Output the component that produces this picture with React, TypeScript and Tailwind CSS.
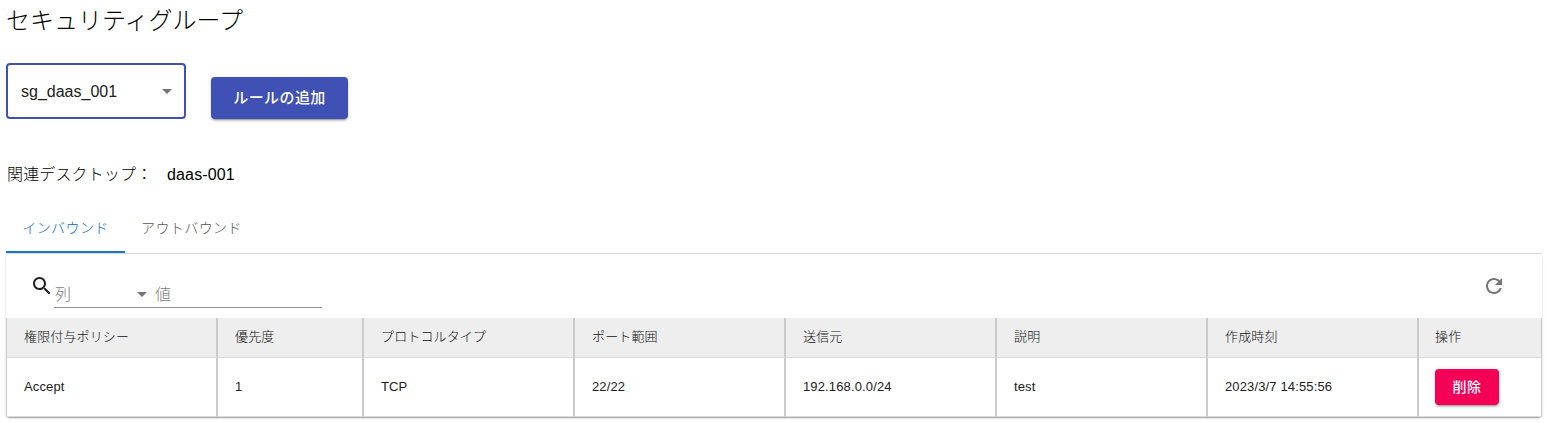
type Column = { label: string; value: string; width: string };

const columns: Column[] = [
  { label: "権限付与ポリシー", value: "Accept", width: "w-[211px]" },
  { label: "優先度", value: "1", width: "w-[146px]" },
  { label: "プロトコルタイプ", value: "TCP", width: "w-[211px]" },
  { label: "ポート範囲", value: "22/22", width: "w-[211px]" },
  { label: "送信元", value: "192.168.0.0/24", width: "w-[211px]" },
  { label: "説明", value: "test", width: "w-[211px]" },
  { label: "作成時刻", value: "2023/3/7 14:55:56", width: "w-[211px]" },
];

function Caret() {
  return (
    <svg viewBox="0 0 24 24" className="size-6 shrink-0 fill-[#757575]" aria-hidden="true">
      <path d="M7 10l5 5 5-5z" />
    </svg>
  );
}

function Toolbar() {
  return (
    <div className="flex h-16 items-start justify-between pr-9 pl-6">
      <div className="flex">
        <svg viewBox="0 0 24 24" className="mt-5 size-6 fill-[#212121]" aria-hidden="true">
          <path d="M15.5 14h-.79l-.28-.27C15.41 12.59 16 11.11 16 9.5 16 5.91 13.09 3 9.5 3S3 5.91 3 9.5 5.91 16 9.5 16c1.61 0 3.09-.59 4.23-1.57l.27.28v.79l5 4.99L20.49 19l-4.99-5zm-6 0C7.01 14 5 11.99 5 9.5S7.01 5 9.5 5 14 7.01 14 9.5 11.99 14 9.5 14z" />
        </svg>
        <div className="mt-[26px] flex h-7 w-[268px] items-center border-b border-[#949494] text-base leading-6 text-[#7c7c7c]">
          <span className="w-[76px] pt-0.5 pl-px">列</span>
          <Caret />
          <span className="pt-0.5 pl-px">値</span>
        </div>
      </div>
      <svg viewBox="0 0 24 24" className="mt-5 size-6 fill-[#757575]" aria-hidden="true">
        <path d="M17.65 6.35C16.2 4.9 14.21 4 12 4c-4.42 0-7.99 3.58-7.99 8s3.57 8 7.99 8c3.73 0 6.84-2.55 7.73-6h-2.08c-.82 2.33-3.04 4-5.65 4-3.31 0-6-2.69-6-6s2.69-6 6-6c1.66 0 3.14.69 4.22 1.78L13 11h7V4l-2.35 2.35z" />
      </svg>
    </div>
  );
}

function RulesTable() {
  return (
    <table className="w-[1536px] table-fixed border-separate border-spacing-0 text-left text-[13px] leading-5 tracking-[0.01071em] text-[#212121]">
      <thead>
        <tr className="h-10 bg-[#eeeeee] text-[#111111]">
          {columns.map((c) => (
            <th key={c.label} className={`${c.width} border-x border-b border-x-[#cbcbcb] border-b-[#dddddd] pr-4 pb-0.5 pl-[17px] font-light`}>
              {c.label}
            </th>
          ))}
          <th className="w-[124px] border-x border-b border-x-[#cbcbcb] border-b-[#dddddd] px-4 pb-0.5 font-light">操作</th>
        </tr>
      </thead>
      <tbody>
        <tr className="h-[59px]">
          {columns.map((c) => (
            <td key={c.label} className="border-x border-b border-x-[#cbcbcb] border-b-[#dddddd] pr-4 pl-[17px]">
              {c.value}
            </td>
          ))}
          <td className="border-x border-b border-x-[#cbcbcb] border-b-[#dddddd] px-4">
            <button className="block h-9 w-16 rounded bg-[#f50057] text-sm font-medium tracking-[0.02857em] text-white shadow-[0_3px_1px_-2px_rgba(0,0,0,0.2),0_2px_2px_0_rgba(0,0,0,0.14),0_1px_5px_0_rgba(0,0,0,0.12)]">
              削除
            </button>
          </td>
        </tr>
      </tbody>
    </table>
  );
}

export default function App() {
  return (
    <main className="h-[423px] overflow-hidden bg-white pl-1.5 font-['Liberation_Sans','Noto_Sans_CJK_JP',sans-serif] font-light text-black">
      <h1 className="flex h-10 items-center pt-0.5 text-2xl font-light">セキュリティグループ</h1>

      <div className="mt-[23px] flex gap-[25px]">
        <div className="flex h-14 w-[180px] items-center justify-between rounded border-2 border-[#3f51b5] pr-[5px] pl-[13px] text-base text-[#212121]">
          <span className="pt-0.5">sg_daas_001</span>
          <Caret />
        </div>
        <button className="mt-3.5 h-[42px] w-[137px] rounded bg-[#3f51b5] text-[15px] font-medium tracking-[0.02857em] text-white shadow-[0_3px_1px_-2px_rgba(0,0,0,0.2),0_2px_2px_0_rgba(0,0,0,0.14),0_1px_5px_0_rgba(0,0,0,0.12)]">
          ルールの追加
        </button>
      </div>

      <div className="mt-11 flex h-6 items-center pl-px text-base tracking-[0.00938em]">
        <span className="w-40">関連デスクトップ：</span>
        <span>daas-001</span>
      </div>

      <div className="mt-[18px] flex h-[49px] w-[1536px] border-b border-[#dddddd] text-sm tracking-[0.02857em]">
        <div className="flex h-12 w-[119px] items-center justify-center border-b-2 border-[#1976d2] text-[#0867c6]">
          インバウンド
        </div>
        <div className="flex h-12 w-[133px] items-center justify-center border-b-2 border-transparent text-[#555555]">
          アウトバウンド
        </div>
      </div>

      <section className="w-[1536px] rounded shadow-[0_2px_1px_-1px_rgba(0,0,0,0.2),0_1px_1px_0_rgba(0,0,0,0.14),0_1px_3px_0_rgba(0,0,0,0.12)]">
        <Toolbar />
        <RulesTable />
      </section>
    </main>
  );
}
